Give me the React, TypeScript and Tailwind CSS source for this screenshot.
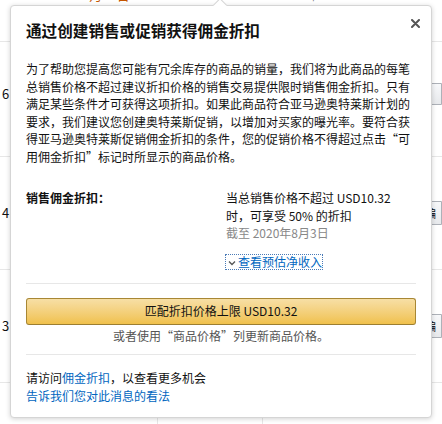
import React from "react";

const font = "font-['Noto_Sans_CJK_SC','Noto_Sans',sans-serif]";

const BackgroundRow = ({ digit, last }: { digit: string; last?: boolean }) => (
  <div className={`relative flex h-[113px] items-center justify-between ${last ? "" : "border-b border-[#e7e7e7]"}`}>
    <span className="ml-[2px] text-[13px] text-[#111]">{digit}</span>
    <div className="h-[24px] w-[20px] rounded-l-[3px] border border-[#adb1b8] bg-gradient-to-b from-[#f7f8fa] to-[#e7e9ec] pl-[2px] text-[11px] leading-[22px] text-[#111]">
      编
    </div>
  </div>
);

export default function App() {
  return (
    <div className={`relative h-[424px] w-[442px] overflow-hidden bg-white ${font}`}>
      {/* page behind the popover */}
      <div className="flex h-[42px] items-start border-b border-[#e7e7e7]">
        <span className="ml-[82px] -mt-[14px] text-[13px] leading-[18px] text-[#c45500]">3月10日</span>
        <span className="ml-[40px] -mt-[14px] text-[11px] leading-[18px] text-[#7fba00]">▲</span>
        <span className="ml-[120px] -mt-[14px] text-[12px] leading-[18px] text-[#767676]">+ $0.00</span>
      </div>
      <div className="h-[115px] border-b border-[#e7e7e7] flex items-center justify-between">
        <span className="ml-[2px] -mt-[10px] text-[13px] text-[#111]">6</span>
        <div className="-mt-[10px] h-[22px] w-[20px] rounded-l-[3px] border border-[#adb1b8] bg-gradient-to-b from-[#f7f8fa] to-[#e7e9ec]" />
      </div>
      <BackgroundRow digit="4" />
      <BackgroundRow digit="3" />
      <div className="flex h-[41px]">
        <div className="ml-[157px] h-full border-l border-[#e7e7e7]" />
        <div className="ml-[104px] h-full border-l border-[#e7e7e7]" />
      </div>

      {/* popover */}
      <div className="absolute left-[10px] top-[5px] h-[413px] w-[422px] rounded-[4px] border border-[#d5d5d5] bg-white px-[15px] pt-[12px] shadow-[0_1px_5px_rgba(0,0,0,0.18)]">
        <div className="absolute left-[204px] -top-[6px] h-[10px] w-[10px] rotate-45 border-l border-t border-[#d5d5d5] bg-white" />
        <button className="absolute right-[10px] top-[11px] flex h-[12px] w-[12px] items-center justify-center">
          <svg width="9" height="9" viewBox="0 0 9 9">
            <path d="M1 1 L8 8 M8 1 L1 8" stroke="#555" strokeWidth="2" strokeLinecap="round" />
          </svg>
        </button>

        <h2 className="text-[15.6px] font-bold leading-[24px] text-[#111]">通过创建销售或促销获得佣金折扣</h2>

        <p className="mt-[18px] w-[390px] text-[12px] leading-[17.5px] text-[#111]">
          为了帮助您提高您可能有冗余库存的商品的销量，我们将为此商品的每笔总销售价格不超过建议折扣价格的销售交易提供限时销售佣金折扣。只有满足某些条件才可获得这项折扣。如果此商品符合亚马逊奥特莱斯计划的要求，我们建议您创建奥特莱斯促销，以增加对买家的曝光率。要符合获得亚马逊奥特莱斯促销佣金折扣的条件，您的促销价格不得超过点击“可用佣金折扣”标记时所显示的商品价格。
        </p>

        <div className="mt-[24px] flex text-[12px] leading-[17.5px] text-[#111]">
          <div className="w-[200px] font-bold">销售佣金折扣：</div>
          <div className="w-[175px]">
            <div>当总销售价格不超过 USD10.32 时，可享受 50% 的折扣</div>
            <div className="text-[#888]">截至 2020年8月3日</div>
            <div className="mt-[13px] flex">
              <a className="flex h-[14px] items-center gap-[2px] outline-1 outline-dotted outline-[#4a7bb7] text-[#0066c0]">
                <svg width="8" height="8" viewBox="0 0 8 8" className="ml-[2px] mt-[2px]">
                  <path d="M1 2.5 L4 5.5 L7 2.5" stroke="#555" strokeWidth="1.3" fill="none" />
                </svg>
                查看预估净收入
              </a>
            </div>
          </div>
        </div>

        <div className="mt-[14px] border-t border-[#e7e7e7]" />

        <button className="mt-[14px] flex h-[27px] w-[390px] items-center justify-center rounded-[3px] border border-[#a88734] border-b-[#9c7e31] bg-gradient-to-b from-[#f7dfa5] to-[#f0c14b] text-[12px] text-[#111]">
          匹配折扣价格上限 USD10.32
        </button>
        <p className="mt-[2px] text-center text-[12px] leading-[17.5px] text-[#555]">或者使用“商品价格”列更新商品价格。</p>

        <div className="mt-[10px] border-t border-[#e7e7e7]" />

        <div className="mt-[14px] text-[12px] leading-[17.5px] text-[#111]">
          <p>
            请访问<a className="text-[#0066c0]">佣金折扣</a>，以查看更多机会
          </p>
          <p>
            <a className="text-[#0066c0]">告诉我们您对此消息的看法</a>
          </p>
        </div>
      </div>
    </div>
  );
}
